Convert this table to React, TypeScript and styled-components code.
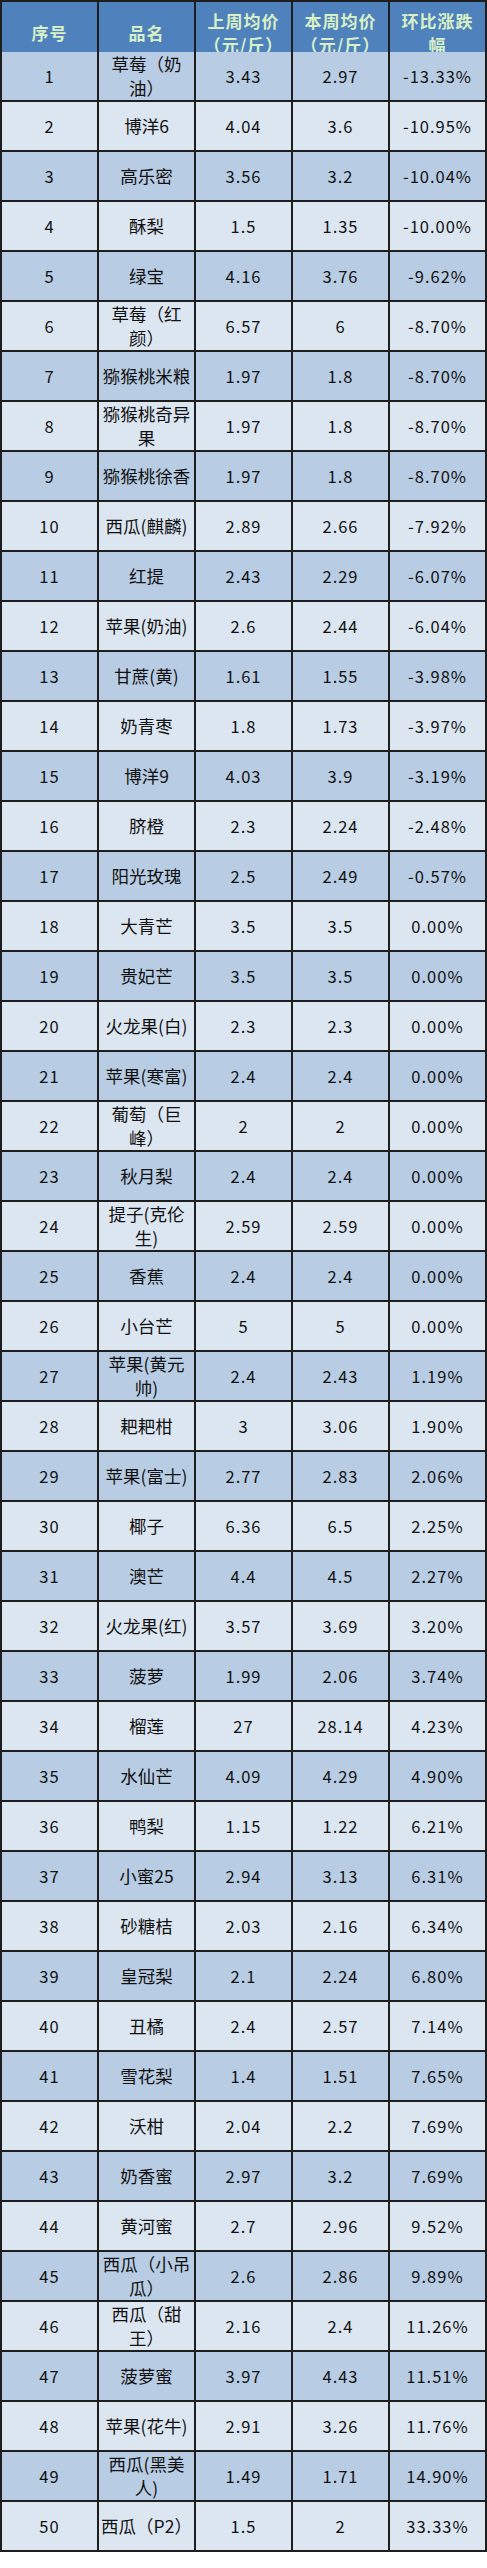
import React from "react";
import styled, { createGlobalStyle } from "styled-components";

const Global = createGlobalStyle`
  html, body { margin: 0; padding: 0; background: #ffffff; }
  body { font-family: "Noto Sans CJK SC", "Noto Sans", sans-serif; }
`;

const Grid = styled.div`
  display: grid;
  grid-template-columns: repeat(5, 95px);
  grid-auto-rows: 48px;
  gap: 2px;
  padding: 2px;
  width: 487px;
  box-sizing: border-box;
  background: #1e1e1e;
`;

const HeadCell = styled.div`
  height: 62px;
  background: #4f81bd;
  color: #d8f0c6;
  font-weight: 700;
  font-size: 17px;
  line-height: 24px;
  letter-spacing: 1px;
  display: flex;
  align-items: center;
  justify-content: center;
  text-align: center;
  padding: 0 4px;
  box-sizing: border-box;
`;

const Cell = styled.div<{ $odd: boolean; $num?: boolean }>`
  background: ${(p) => (p.$odd ? "#b8cce4" : "#dce6f1")};
  color: #111;
  font-size: ${(p) => (p.$num ? "16.5px" : "17.5px")};
  line-height: 24px;
  letter-spacing: ${(p) => (p.$num ? "1px" : "0")};
  display: flex;
  align-items: center;
  justify-content: center;
  text-align: center;
  padding: 0 2px;
  box-sizing: border-box;
`;

const rows: [string, string, string, string][] = [
  ["草莓（奶油）", "3.43", "2.97", "-13.33%"],
  ["博洋6", "4.04", "3.6", "-10.95%"],
  ["高乐密", "3.56", "3.2", "-10.04%"],
  ["酥梨", "1.5", "1.35", "-10.00%"],
  ["绿宝", "4.16", "3.76", "-9.62%"],
  ["草莓（红颜）", "6.57", "6", "-8.70%"],
  ["猕猴桃米粮", "1.97", "1.8", "-8.70%"],
  ["猕猴桃奇异果", "1.97", "1.8", "-8.70%"],
  ["猕猴桃徐香", "1.97", "1.8", "-8.70%"],
  ["西瓜(麒麟)", "2.89", "2.66", "-7.92%"],
  ["红提", "2.43", "2.29", "-6.07%"],
  ["苹果(奶油)", "2.6", "2.44", "-6.04%"],
  ["甘蔗(黄)", "1.61", "1.55", "-3.98%"],
  ["奶青枣", "1.8", "1.73", "-3.97%"],
  ["博洋9", "4.03", "3.9", "-3.19%"],
  ["脐橙", "2.3", "2.24", "-2.48%"],
  ["阳光玫瑰", "2.5", "2.49", "-0.57%"],
  ["大青芒", "3.5", "3.5", "0.00%"],
  ["贵妃芒", "3.5", "3.5", "0.00%"],
  ["火龙果(白)", "2.3", "2.3", "0.00%"],
  ["苹果(寒富)", "2.4", "2.4", "0.00%"],
  ["葡萄（巨峰）", "2", "2", "0.00%"],
  ["秋月梨", "2.4", "2.4", "0.00%"],
  ["提子(克伦生)", "2.59", "2.59", "0.00%"],
  ["香蕉", "2.4", "2.4", "0.00%"],
  ["小台芒", "5", "5", "0.00%"],
  ["苹果(黄元帅)", "2.4", "2.43", "1.19%"],
  ["耙耙柑", "3", "3.06", "1.90%"],
  ["苹果(富士)", "2.77", "2.83", "2.06%"],
  ["椰子", "6.36", "6.5", "2.25%"],
  ["澳芒", "4.4", "4.5", "2.27%"],
  ["火龙果(红)", "3.57", "3.69", "3.20%"],
  ["菠萝", "1.99", "2.06", "3.74%"],
  ["榴莲", "27", "28.14", "4.23%"],
  ["水仙芒", "4.09", "4.29", "4.90%"],
  ["鸭梨", "1.15", "1.22", "6.21%"],
  ["小蜜25", "2.94", "3.13", "6.31%"],
  ["砂糖桔", "2.03", "2.16", "6.34%"],
  ["皇冠梨", "2.1", "2.24", "6.80%"],
  ["丑橘", "2.4", "2.57", "7.14%"],
  ["雪花梨", "1.4", "1.51", "7.65%"],
  ["沃柑", "2.04", "2.2", "7.69%"],
  ["奶香蜜", "2.97", "3.2", "7.69%"],
  ["黄河蜜", "2.7", "2.96", "9.52%"],
  ["西瓜（小吊瓜）", "2.6", "2.86", "9.89%"],
  ["西瓜（甜王）", "2.16", "2.4", "11.26%"],
  ["菠萝蜜", "3.97", "4.43", "11.51%"],
  ["苹果(花牛)", "2.91", "3.26", "11.76%"],
  ["西瓜(黑美人)", "1.49", "1.71", "14.90%"],
  ["西瓜（P2）", "1.5", "2", "33.33%"],
];

const headers = ["序号", "品名", "上周均价（元/斤）", "本周均价（元/斤）", "环比涨跌幅"];

export default function App() {
  return (
    <>
      <Global />
      <Grid>
        {headers.map((h) => (
          <HeadCell key={h}>{h}</HeadCell>
        ))}
        {rows.map((r, i) => {
          const odd = i % 2 === 0;
          return (
            <React.Fragment key={i}>
              <Cell $odd={odd} $num>{i + 1}</Cell>
              <Cell $odd={odd}>{r[0]}</Cell>
              <Cell $odd={odd} $num>{r[1]}</Cell>
              <Cell $odd={odd} $num>{r[2]}</Cell>
              <Cell $odd={odd} $num>{r[3]}</Cell>
            </React.Fragment>
          );
        })}
      </Grid>
    </>
  );
}
